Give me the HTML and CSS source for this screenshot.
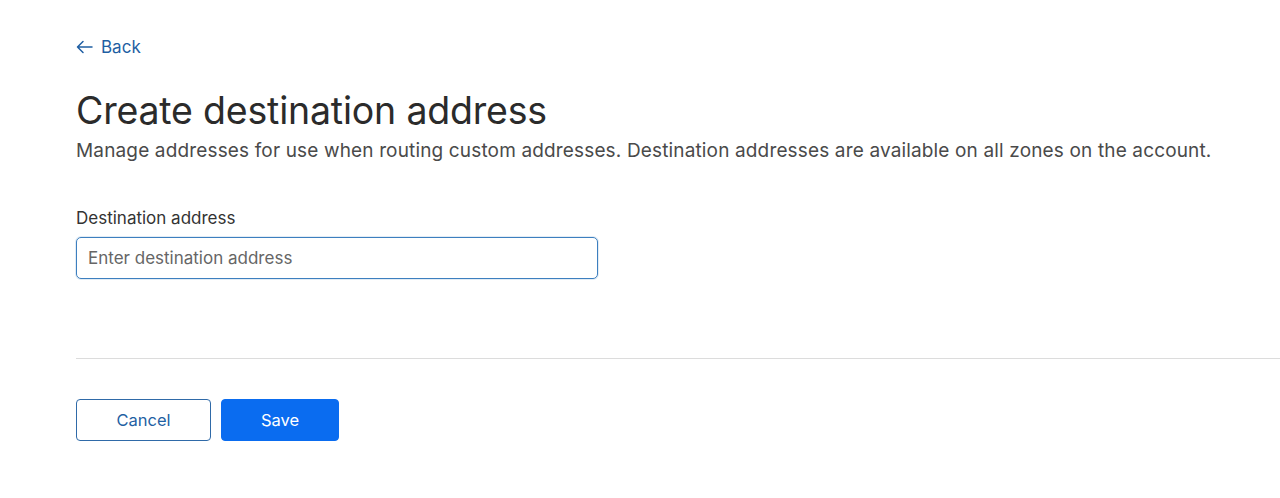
FILE: index.html
```html
<!DOCTYPE html>
<html lang="en">
<head>
<meta charset="utf-8">
<title>Create destination address</title>
<link rel="stylesheet" href="styles.css">
</head>
<body>
<main class="page">
  <a class="back" href="#">
    <svg class="back-icon" width="17" height="14" viewBox="0 0 17 14" fill="none" stroke="currentColor" stroke-width="1.5" stroke-linecap="round" stroke-linejoin="round"><path d="M16 7H1.5M7 1.5L1.5 7L7 12.5"/></svg>
    <span>Back</span>
  </a>
  <h1 class="title">Create destination address</h1>
  <p class="subtitle">Manage addresses for use when routing custom addresses. Destination addresses are available on all zones on the account.</p>
  <label class="field">
    <span class="field-label">Destination address</span>
    <input class="field-input" type="text" placeholder="Enter destination address">
  </label>
  <hr class="divider">
  <div class="actions">
    <button class="btn btn-secondary" type="button">Cancel</button>
    <button class="btn btn-primary" type="button">Save</button>
  </div>
</main>
</body>
</html>
```
FILE: styles.css
```css
* { box-sizing: border-box; }
html, body { margin: 0; padding: 0; background: #fff; }
body {
  font-family: Inter, "Noto Sans", "Liberation Sans", sans-serif;
  color: #313131;
}
.page {
  padding: 35px 0 0 76px;
  display: flex;
  flex-direction: column;
  align-items: flex-start;
}
.back {
  display: flex;
  align-items: center;
  gap: 8px;
  color: #1f5fa3;
  text-decoration: none;
  font-size: 17px;
  line-height: 24px;
}
.back-icon { display: block; }
.title {
  margin: 30px 0 0;
  font-size: 37.5px;
  font-weight: 400;
  line-height: 44px;
  color: #2b2b2b;
  letter-spacing: -0.2px;
}
.subtitle {
  margin: 5px 0 0;
  font-size: 19px;
  line-height: 26px;
  letter-spacing: 0.15px;
  color: #4a4a4a;
}
.field {
  margin-top: 42px;
  display: flex;
  flex-direction: column;
  gap: 7px;
}
.field-label {
  font-size: 17px;
  line-height: 24px;
  color: #333;
}
.field-input {
  width: 522px;
  height: 42px;
  border: 1px solid #3d7fbf;
  border-radius: 5px;
  padding: 0 11px;
  font-family: inherit;
  font-size: 17px;
  color: #333;
  outline: none;
  box-shadow: 0 0 0 1px rgba(61,127,191,0.15);
}
.field-input::placeholder { color: #666; }
.divider {
  align-self: stretch;
  margin: 79px 0 0;
  border: 0;
  border-top: 1px solid #dcdcdc;
  height: 0;
}
.actions {
  margin-top: 40px;
  display: flex;
  gap: 10px;
}
.btn {
  height: 42px;
  border-radius: 4px;
  font-family: inherit;
  font-size: 16.5px;
  cursor: pointer;
}
.btn-secondary {
  width: 135px;
  background: #fff;
  border: 1px solid #2f6aa8;
  color: #1f5fa3;
}
.btn-primary {
  width: 118px;
  background: #0a6cf0;
  border: 1px solid #0a6cf0;
  color: #fff;
}
```
